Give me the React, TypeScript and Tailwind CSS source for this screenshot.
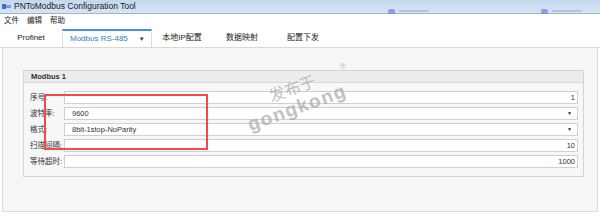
const font = { fontFamily: '"Liberation Sans", "Noto Sans CJK SC", sans-serif' };

function Field({ label, value, align = "left", select = false }: { label: string; value: string; align?: "left" | "right"; select?: boolean }) {
  return (
    <div className="flex h-[13px] items-center">
      <div className="w-[40px] shrink-0 pl-[6px] text-[7.5px] leading-none text-[#333]">{label}</div>
      <div className="flex h-[13px] w-[514px] items-center border border-[#cfcfcf] bg-white px-[2px] text-[7.5px] leading-none text-[#333]">
        <span className={`flex-1 pl-[5px] ${align === "right" ? "text-right" : ""}`}>{value}</span>
        {select && <span className="pr-[3px] text-[5px] text-[#222]">▼</span>}
      </div>
    </div>
  );
}

export default function App() {
  return (
    <div className="relative flex h-[212px] w-[600px] flex-col overflow-hidden bg-white" style={font}>
      {/* title bar */}
      <div className="flex h-[14px] shrink-0 items-center border-b border-[#9fb3cc] bg-gradient-to-b from-[#c4d7ee] to-[#d6e4f4] pl-[2px]">
        <svg width="9" height="7" viewBox="0 0 9 7" className="mr-[3px]">
          <rect x="0" y="1" width="4" height="5" fill="#3a6fc4" />
          <rect x="4" y="2" width="5" height="3" fill="#6fa0e0" />
        </svg>
        <span className="text-[8.5px] leading-none text-[#1a1a1a]">PNToModbus Configuration Tool</span>
        <div className="ml-[252px] mt-[9px] flex items-center gap-[4px]">
          <span className="h-[5px] w-[7px] rounded-t-[2px] bg-[#5d8fd6] opacity-70" />
          <span className="h-[2px] w-[30px] bg-[#a9b8cc] opacity-70" />
        </div>
        <div className="ml-[112px] mt-[9px] flex items-center gap-[4px]">
          <span className="h-[5px] w-[7px] rounded-t-[2px] bg-[#5d8fd6] opacity-70" />
          <span className="h-[2px] w-[30px] bg-[#a9b8cc] opacity-70" />
        </div>
      </div>

      {/* menu bar */}
      <div className="flex h-[14px] shrink-0 items-center gap-[8px] pl-[4px] text-[7.5px] leading-none text-[#222]">
        <span>文件</span>
        <span>编辑</span>
        <span>帮助</span>
      </div>

      {/* tabs */}
      <div className="flex h-[20px] shrink-0 items-end border-b border-[#d9d9d9] text-[8px] leading-none text-[#222]">
        <div className="flex h-[18px] w-[62px] items-center justify-center">Profinet</div>
        <div className="flex h-[18px] w-[90px] items-center border-t-2 border-x border-t-[#4a90d9] border-x-[#dcdcdc] bg-white pl-[7px] text-[#3a78c2]">
          <span>Modbus RS-485</span>
          <span className="ml-[11px] text-[6px] text-[#333]">▼</span>
        </div>
        <div className="flex h-[18px] w-[60px] items-center justify-center">本地IP配置</div>
        <div className="flex h-[18px] w-[60px] items-center justify-center">数据映射</div>
        <div className="flex h-[18px] w-[62px] items-center justify-center">配置下发</div>
      </div>

      {/* content */}
      <div className="mx-[2px] flex-1 border-x border-b border-[#dcdcdc] bg-[#f6f6f6] pl-[20px] pt-[22px]">
        <div className="w-[561px] border border-[#d4d4d4] bg-[#f7f7f7] pb-[8px]">
          <div className="flex h-[12px] items-center border-b border-[#d8d8d8] bg-[#ececec] pl-[7px] text-[7.5px] font-bold leading-none text-[#333]">
            Modbus 1
          </div>
          <div className="flex flex-col gap-[3px] pt-[8px]">
            <Field label="序号:" value="1" align="right" />
            <Field label="波特率:" value="9600" select />
            <Field label="格式:" value="8bit-1stop-NoParity" select />
            <Field label="扫描间隔:" value="10" align="right" />
            <Field label="等待超时:" value="1000" align="right" />
          </div>
        </div>
      </div>

      {/* red highlight */}
      <div className="pointer-events-none absolute left-[44px] top-[94px] h-[56px] w-[164px] border-2 border-[#f24a4a]" />

      {/* watermark */}
      <div className="pointer-events-none absolute left-[242px] top-[80px] -rotate-[20deg] text-[#a8a8a8] opacity-70">
        <div className="mb-[1px] flex items-start pl-[30px] text-[16px] leading-none">
          发布于<span className="ml-[28px] text-[8px]">®</span>
        </div>
        <div className="text-[19px] font-semibold leading-none tracking-[1.5px]">gongkong</div>
      </div>
    </div>
  );
}
